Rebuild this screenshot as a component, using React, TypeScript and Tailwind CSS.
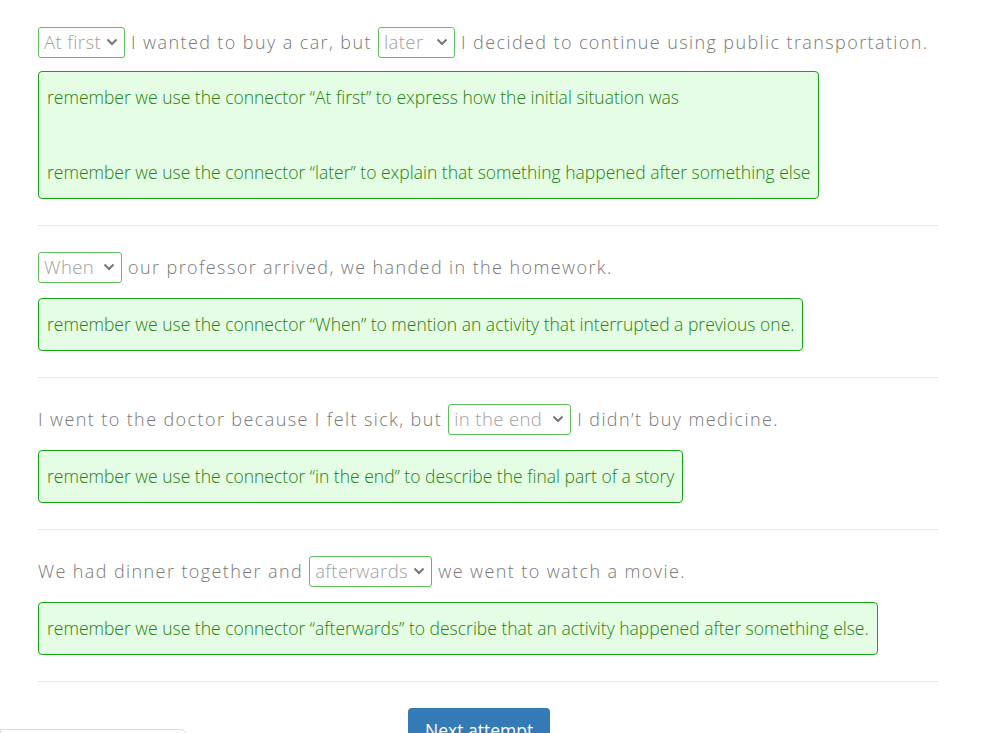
import React from 'react'

type Part = string | { choice: string; w: number }

const items: { parts: Part[]; notes: string[] }[] = [
  {
    parts: [{ choice: 'At first', w: 87 }, ' I wanted to buy a car, but ', { choice: 'later', w: 77 }, ' I decided to continue using public transportation.'],
    notes: [
      'remember we use the connector “At first” to express how the initial situation was',
      'remember we use the connector “later” to explain that something happened after something else',
    ],
  },
  {
    parts: [{ choice: 'When', w: 84 }, ' our professor arrived, we handed in the homework.'],
    notes: ['remember we use the connector “When” to mention an activity that interrupted a previous one.'],
  },
  {
    parts: ['I went to the doctor because I felt sick, but ', { choice: 'in the end', w: 123 }, ' I didn’t buy medicine.'],
    notes: ['remember we use the connector “in the end” to describe the final part of a story'],
  },
  {
    parts: ['We had dinner together and ', { choice: 'afterwards', w: 123 }, ' we went to watch a movie.'],
    notes: ['remember we use the connector “afterwards” to describe that an activity happened after something else.'],
  },
]

function Choice({ label, w }: { label: string; w: number }) {
  return (
    <span
      className="inline-flex h-[31px] items-center justify-between rounded-[3px] border border-[#5cc15c] bg-white pl-[5px] pr-[6px] align-middle text-[18.5px] tracking-[0.4px] text-[#a0a0a0]"
      style={{ width: w }}
    >
      <span>{label}</span>
      <svg width="12" height="8" viewBox="0 0 12 8" className="ml-1 shrink-0">
        <path d="M1.5 1.5 L6 6 L10.5 1.5" fill="none" stroke="#777" strokeWidth="2" />
      </svg>
    </span>
  )
}

export default function App() {
  return (
    <div className="relative min-h-screen bg-white" style={{ fontFamily: '"Open Sans", "Liberation Sans", sans-serif' }}>
      <div className="ml-[38px] w-[900px] pt-px">
        {items.map((it, i) => (
          <div key={i} className="border-b border-[#e8e8e8] pb-[26px] pt-[26px]">
            <div className="flex h-[30px] items-center whitespace-pre text-[18px] font-light tracking-[1.4px] text-[#787878]">
              {it.parts.map((p, j) =>
                typeof p === 'string' ? <span key={j}>{p}</span> : <Choice key={j} label={p.choice} w={p.w} />
              )}
            </div>
            <div
              className={`${i === 0 ? 'mt-[14px]' : 'mt-[16px]'} flex w-fit flex-col gap-[54px] rounded-[4px] border border-[#16a616] bg-[#e4fde4] px-[8px] py-[15px] text-[17.5px] font-light leading-[21px] tracking-[0px] text-[#25820c]`}
            >
              {it.notes.map((n, k) => (
                <p key={k}>{n}</p>
              ))}
            </div>
          </div>
        ))}
        <button className="ml-[370px] mt-[26px] rounded-[4px] bg-[#337ab7] px-[17px] pb-[8px] pt-[9px] text-[17.5px] text-white">
          Next attempt
        </button>
      </div>
      <div className="absolute left-0 top-[729px] h-[20px] w-[186px] rounded-tr-[5px] border border-[#dcdcdc] bg-white" />
    </div>
  )
}
